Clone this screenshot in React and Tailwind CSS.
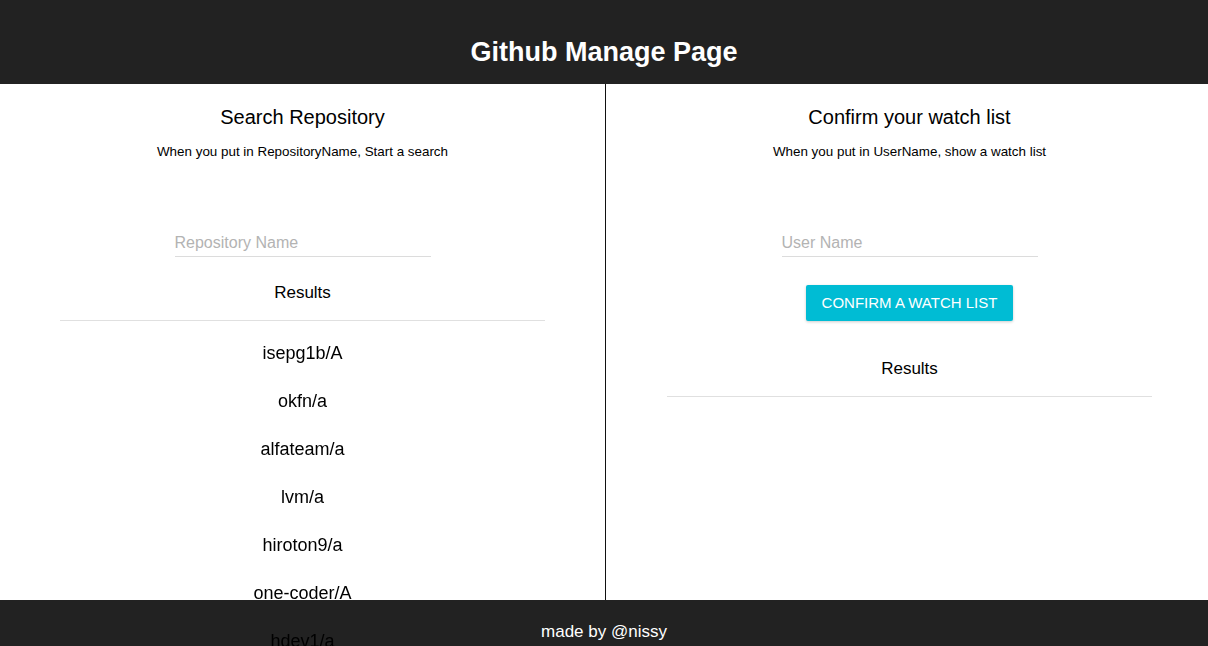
import React from "react";

const repos = [
	"isepg1b/A",
	"okfn/a",
	"alfateam/a",
	"lvm/a",
	"hiroton9/a",
	"one-coder/A",
	"hdev1/a",
	"gnb/a",
	"sakura/a",
];

const font = { fontFamily: '"Liberation Sans", Arial, sans-serif' };

const Panel = ({ title, subtitle, children }) => (
	<div className="flex flex-col items-center pt-[19px]">
		<h2 className="text-[20px] leading-[28px] text-black">{title}</h2>
		<p className="mt-[12px] text-[13.4px] leading-[18px] text-black">{subtitle}</p>
		{children}
	</div>
);

const UnderlineInput = ({ placeholder }) => (
	<input
		type="text"
		placeholder={placeholder}
		className="mt-[64px] h-[32px] w-[256px] border-b border-[#dcdcdc] bg-transparent pt-[4px] text-[16px] text-[#222] outline-none placeholder:text-[#b3b3b3]"
	/>
);

const ResultsHeader = ({ className = "" }) => (
	<>
		<h3 className={`text-[17px] leading-[24px] text-black ${className}`}>Results</h3>
		<div className="mt-[15px] w-[485px] border-t border-[#e0e0e0]" />
	</>
);

export default function App() {
	return (
		<div className="min-h-screen bg-white" style={font}>
			{/* Header */}
			<header className="h-[84px] bg-[#222222] pt-[36px] text-center">
				<h1 className="text-[27px] font-bold leading-[32px] text-white">Github Manage Page</h1>
			</header>

			<main className="flex">
				{/* Search side */}
				<section className="w-[606px] border-r border-[#111] pb-[40px]">
					<Panel title="Search Repository" subtitle="When you put in RepositoryName, Start a search">
						<UnderlineInput placeholder="Repository Name" />
						<ResultsHeader className="mt-[24px]" />
						<ul className="relative z-10 mt-[8px] flex flex-col items-center">
							{repos.map((r) => (
								<li key={r} className="flex h-[48px] items-center text-[18px] text-black">
									{r}
								</li>
							))}
						</ul>
					</Panel>
				</section>

				{/* Watch list side */}
				<section className="flex-1 pl-[5px]">
					<Panel title="Confirm your watch list" subtitle="When you put in UserName, show a watch list">
						<UnderlineInput placeholder="User Name" />
						<button
							type="button"
							className="mt-[28px] h-[36px] w-[207px] rounded-[2px] bg-[#00bcd4] text-[15px] uppercase text-white shadow-[0_1px_3px_rgba(0,0,0,0.2)]"
						>
							Confirm a watch list
						</button>
						<ResultsHeader className="mt-[36px]" />
					</Panel>
				</section>
			</main>

			{/* Footer */}
			<footer className="fixed bottom-0 left-0 right-0 h-[46px] bg-[#222222] pt-[20px] text-center">
				<p className="text-[17px] leading-[24px] text-white">made by @nissy</p>
			</footer>
		</div>
	);
}
